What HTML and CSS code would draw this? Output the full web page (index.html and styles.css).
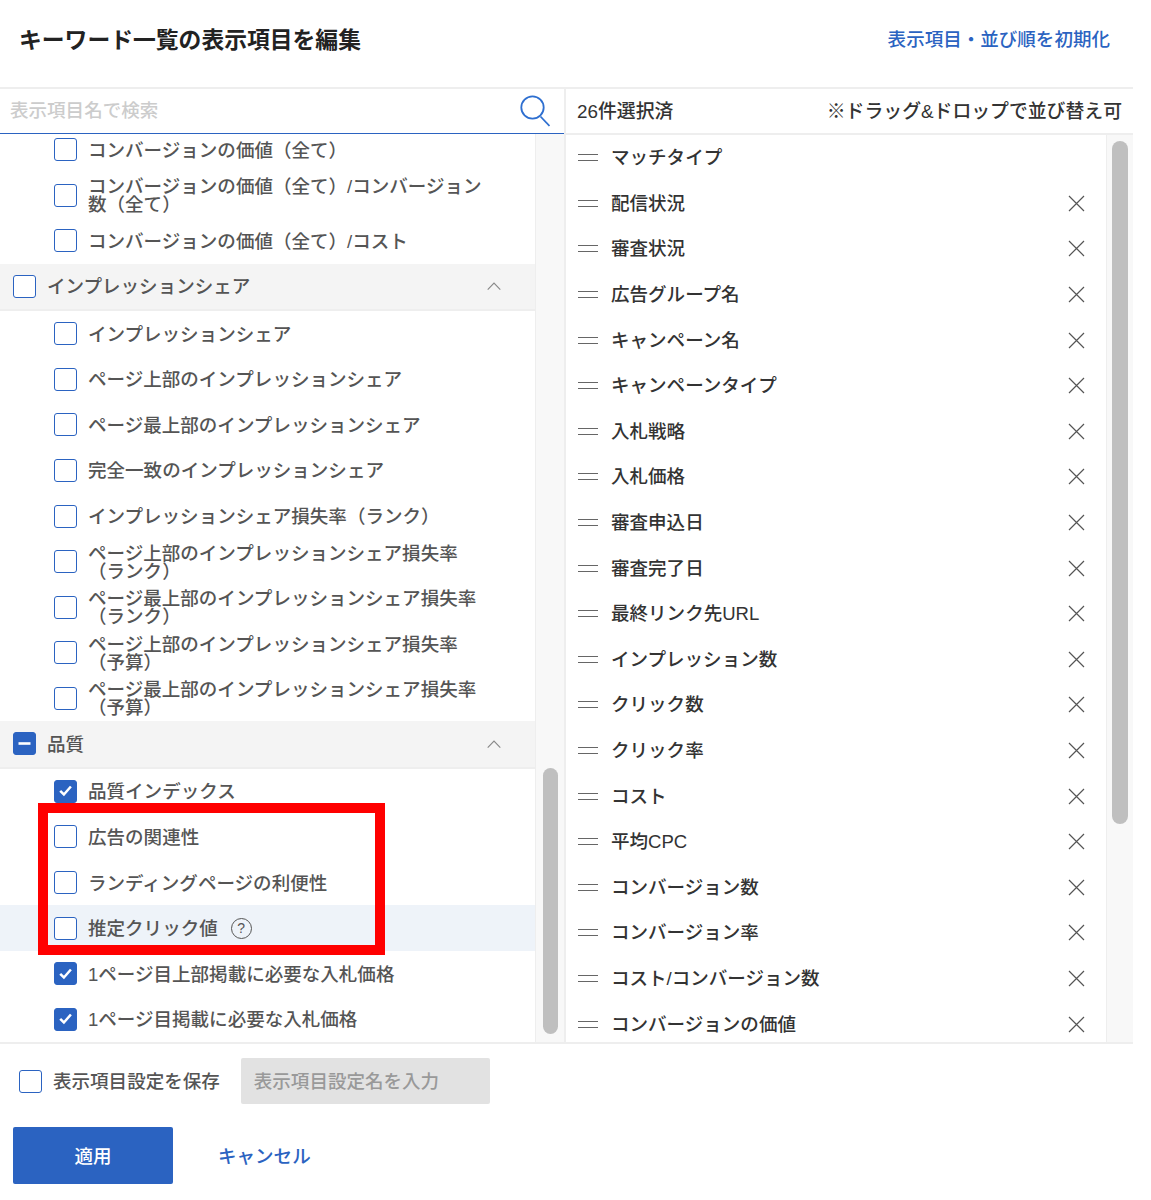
FILE: index.html
```html
<!DOCTYPE html>
<html lang="ja">
<head>
<meta charset="utf-8">
<title>キーワード一覧の表示項目を編集</title>
<link rel="stylesheet" href="styles.css">
</head>
<body>
<svg class="sprite" width="0" height="0" aria-hidden="true">
  <symbol id="i-x" viewBox="0 0 17 17"><path d="M1 1L16 16M16 1L1 16" fill="none" stroke="#555" stroke-width="1.2"/></symbol>
  <symbol id="i-chev" viewBox="0 0 14 8"><path d="M.7 7.6L7 1l6.3 6.6" fill="none" stroke="#888" stroke-width="1.1"/></symbol>
  <symbol id="i-check" viewBox="0 0 23 23"><path d="M6.2 11.8l3.7 3.7 7-8" fill="none" stroke="#fff" stroke-width="2.5"/></symbol>
  <symbol id="i-minus" viewBox="0 0 23 23"><path d="M5.5 11.5h12" fill="none" stroke="#fff" stroke-width="2.6"/></symbol>
</svg>
<div class="modal">
  <header class="top">
    <h1 class="title">キーワード一覧の表示項目を編集</h1>
    <a class="link reset">表示項目・並び順を初期化</a>
  </header>
  <div class="panels">
    <section class="left">
      <div class="search">
        <span class="search-ph">表示項目名で検索</span>
        <svg class="search-icon" viewBox="0 0 30 32"><circle cx="12.5" cy="12.5" r="11.2" fill="none" stroke="#2e6fd0" stroke-width="1.8"/><path d="M20.5 21.5l9 9.5" fill="none" stroke="#2e6fd0" stroke-width="1.8"/></svg>
      </div>
      <div class="left-body">
        <div class="list">
          <div class="list-inner">
            <div class="row"><span class="cb"></span><span class="lbl">コンバージョンの価値（全て）</span></div>
            <div class="row"><span class="cb"></span><span class="lbl">コンバージョンの価値（全て）/コンバージョン数（全て）</span></div>
            <div class="row"><span class="cb"></span><span class="lbl">コンバージョンの価値（全て）/コスト</span></div>
            <div class="group"><span class="cb"></span><span class="lbl">インプレッションシェア</span><svg class="chev"><use href="#i-chev"/></svg></div>
            <div class="row"><span class="cb"></span><span class="lbl">インプレッションシェア</span></div>
            <div class="row"><span class="cb"></span><span class="lbl">ページ上部のインプレッションシェア</span></div>
            <div class="row"><span class="cb"></span><span class="lbl">ページ最上部のインプレッションシェア</span></div>
            <div class="row"><span class="cb"></span><span class="lbl">完全一致のインプレッションシェア</span></div>
            <div class="row"><span class="cb"></span><span class="lbl">インプレッションシェア損失率（ランク）</span></div>
            <div class="row"><span class="cb"></span><span class="lbl">ページ上部のインプレッションシェア損失率（ランク）</span></div>
            <div class="row"><span class="cb"></span><span class="lbl">ページ最上部のインプレッションシェア損失率（ランク）</span></div>
            <div class="row"><span class="cb"></span><span class="lbl">ページ上部のインプレッションシェア損失率（予算）</span></div>
            <div class="row"><span class="cb"></span><span class="lbl">ページ最上部のインプレッションシェア損失率（予算）</span></div>
            <div class="group"><span class="cb on"><svg class="mark"><use href="#i-minus"/></svg></span><span class="lbl">品質</span><svg class="chev"><use href="#i-chev"/></svg></div>
            <div class="row"><span class="cb on"><svg class="mark"><use href="#i-check"/></svg></span><span class="lbl">品質インデックス</span></div>
            <div class="row"><span class="cb"></span><span class="lbl">広告の関連性</span></div>
            <div class="row"><span class="cb"></span><span class="lbl">ランディングページの利便性</span></div>
            <div class="row hover"><span class="cb"></span><span class="lbl">推定クリック値</span><span class="help">?</span></div>
            <div class="row"><span class="cb on"><svg class="mark"><use href="#i-check"/></svg></span><span class="lbl">1ページ目上部掲載に必要な入札価格</span></div>
            <div class="row"><span class="cb on"><svg class="mark"><use href="#i-check"/></svg></span><span class="lbl">1ページ目掲載に必要な入札価格</span></div>
          </div>
        </div>
        <div class="track track-left"><div class="thumb thumb-left"></div></div>
      </div>
    </section>
    <section class="right">
      <div class="right-head">
        <span>26件選択済</span>
        <span>※ドラッグ&amp;ドロップで並び替え可</span>
      </div>
      <div class="right-body">
        <ul class="sel">
          <li class="item"><span class="grip"></span><span class="name">マッチタイプ</span></li>
          <li class="item"><span class="grip"></span><span class="name">配信状況</span><svg class="x"><use href="#i-x"/></svg></li>
          <li class="item"><span class="grip"></span><span class="name">審査状況</span><svg class="x"><use href="#i-x"/></svg></li>
          <li class="item"><span class="grip"></span><span class="name">広告グループ名</span><svg class="x"><use href="#i-x"/></svg></li>
          <li class="item"><span class="grip"></span><span class="name">キャンペーン名</span><svg class="x"><use href="#i-x"/></svg></li>
          <li class="item"><span class="grip"></span><span class="name">キャンペーンタイプ</span><svg class="x"><use href="#i-x"/></svg></li>
          <li class="item"><span class="grip"></span><span class="name">入札戦略</span><svg class="x"><use href="#i-x"/></svg></li>
          <li class="item"><span class="grip"></span><span class="name">入札価格</span><svg class="x"><use href="#i-x"/></svg></li>
          <li class="item"><span class="grip"></span><span class="name">審査申込日</span><svg class="x"><use href="#i-x"/></svg></li>
          <li class="item"><span class="grip"></span><span class="name">審査完了日</span><svg class="x"><use href="#i-x"/></svg></li>
          <li class="item"><span class="grip"></span><span class="name">最終リンク先URL</span><svg class="x"><use href="#i-x"/></svg></li>
          <li class="item"><span class="grip"></span><span class="name">インプレッション数</span><svg class="x"><use href="#i-x"/></svg></li>
          <li class="item"><span class="grip"></span><span class="name">クリック数</span><svg class="x"><use href="#i-x"/></svg></li>
          <li class="item"><span class="grip"></span><span class="name">クリック率</span><svg class="x"><use href="#i-x"/></svg></li>
          <li class="item"><span class="grip"></span><span class="name">コスト</span><svg class="x"><use href="#i-x"/></svg></li>
          <li class="item"><span class="grip"></span><span class="name">平均CPC</span><svg class="x"><use href="#i-x"/></svg></li>
          <li class="item"><span class="grip"></span><span class="name">コンバージョン数</span><svg class="x"><use href="#i-x"/></svg></li>
          <li class="item"><span class="grip"></span><span class="name">コンバージョン率</span><svg class="x"><use href="#i-x"/></svg></li>
          <li class="item"><span class="grip"></span><span class="name">コスト/コンバージョン数</span><svg class="x"><use href="#i-x"/></svg></li>
          <li class="item"><span class="grip"></span><span class="name">コンバージョンの価値</span><svg class="x"><use href="#i-x"/></svg></li>
        </ul>
        <div class="track track-right"><div class="thumb thumb-right"></div></div>
      </div>
    </section>
  </div>
  <div class="save">
    <span class="cb"></span>
    <span class="save-label">表示項目設定を保存</span>
    <div class="save-input">表示項目設定名を入力</div>
  </div>
  <div class="actions">
    <button class="apply">適用</button>
    <a class="link cancel">キャンセル</a>
  </div>
</div>
<div class="annotation"></div>
</body>
</html>
```
FILE: styles.css
```css
* { box-sizing: border-box; }
html, body { margin: 0; padding: 0; background: #fff; }
body {
  position: relative;
  height: 1200px;
  overflow: hidden;
  font-family: "Liberation Sans", "Noto Sans CJK JP", sans-serif;
  font-size: 18.55px;
  font-weight: 500;
  color: #555;
}
.sprite { position: absolute; }
.modal { width: 1133px; }

.top {
  height: 89px;
  border-bottom: 2px solid #eee;
  display: flex;
  align-items: center;
  justify-content: space-between;
  padding: 0 23px 8px 19px;
}
.title { margin: 0; font-size: 22.8px; font-weight: 700; line-height: 30px; color: #222; }
.link { color: #2b63c1; font-weight: 500; line-height: 26px; }

.panels { display: flex; height: 955px; border-bottom: 2px solid #eee; }
.left { width: 564px; display: flex; flex-direction: column; }
.search {
  height: 45px;
  flex: none;
  border-bottom: 1px solid #2b63c1;
  display: flex;
  align-items: center;
  justify-content: space-between;
  padding: 0 14px 1px 10px;
}
.search-ph { color: #ccc; line-height: 26px; }
.search-icon { width: 30px; height: 32px; }
.left-body { flex: 1; display: flex; min-height: 0; }
.list { width: 535px; overflow: hidden; }
.list-inner { margin-top: -7.2px; }

.row, .group { display: flex; align-items: center; line-height: 18px; }
.row { height: 45.6px; padding-left: 54px; }
.group {
  height: 47.3px;
  padding: 0 34px 0 13px;
  background: #f4f4f4;
  border-bottom: 2px solid #eee;
}
.hover { background: #eef3f9; }
.lbl { margin-left: 11px; width: 405px; padding-top: 2px; }
.group .lbl { flex: 1; width: auto; }
.hover .lbl { width: auto; }

.cb {
  width: 23px;
  height: 23px;
  flex: none;
  border: 1.5px solid #2b63c1;
  border-radius: 3px;
  background: #fff;
  display: block;
}
.cb.on { background: #2b63c1; position: relative; }
.mark { position: absolute; left: -1.5px; top: -1.5px; width: 23px; height: 23px; }
.chev { width: 14px; height: 8px; flex: none; }
.help {
  width: 21px;
  height: 21px;
  margin-left: 13px;
  border: 1.3px solid #555;
  border-radius: 50%;
  font-size: 14px;
  font-weight: 400;
  line-height: 19px;
  text-align: center;
}

.track {
  flex: none;
  background: #f8f8f8;
  border-left: 1px solid #eee;
}
.track-left { width: 29px; padding: 634px 6px 0 7px; }
.thumb { background: #bfbfbf; border-radius: 8px; }
.thumb-left { height: 266px; }
.track-right { width: 27px; padding: 6px 5px 0 5px; }
.thumb-right { height: 683px; }

.right { flex: 1; border-left: 2px solid #eee; display: flex; flex-direction: column; min-width: 0; }
.right-head {
  height: 46px;
  flex: none;
  border-bottom: 2px solid #eee;
  display: flex;
  align-items: center;
  justify-content: space-between;
  padding: 2px 11px 0 11px;
  color: #333;
  font-size: 18.85px;
  line-height: 26px;
}
.right-body { flex: 1; display: flex; min-height: 0; }
.sel { flex: 1; margin: 0; padding: 0; list-style: none; overflow: hidden; }
.item {
  height: 45.6px;
  display: flex;
  align-items: center;
  padding: 0 21px 0 12px;
  color: #333;
  line-height: 26px;
}
.grip {
  width: 20px;
  height: 7px;
  flex: none;
  border-top: 1.5px solid #666;
  border-bottom: 1.5px solid #666;
}
.name { flex: 1; margin-left: 13px; padding-top: 1px; }
.x { width: 17px; height: 17px; flex: none; }

.save {
  display: flex;
  align-items: center;
  height: 46px;
  margin-top: 14px;
  padding-left: 19px;
}
.save-label { margin-left: 11px; padding-top: 2px; line-height: 26px; }
.save-input {
  width: 249px;
  height: 46px;
  margin-left: 21px;
  padding: 1px 0 0 13px;
  background: #e2e2e2;
  border-radius: 2px;
  color: #999;
  line-height: 46px;
}

.actions { display: flex; align-items: center; margin-top: 23px; padding-left: 13px; }
.apply {
  width: 160px;
  height: 57px;
  border: 0;
  border-radius: 2px;
  padding: 0 0 3px;
  background: #2b63c1;
  color: #fff;
  font: 500 18.55px "Liberation Sans", "Noto Sans CJK JP", sans-serif;
}
.cancel { margin-left: 45px; padding-top: 2px; }

.annotation {
  position: absolute;
  left: 38px;
  top: 803px;
  width: 347px;
  height: 152px;
  border: 10px solid #f00;
}
```
